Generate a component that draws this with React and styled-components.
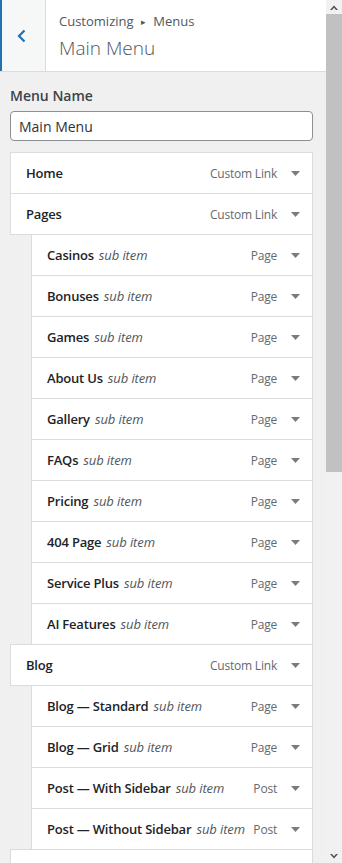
import React from 'react';
import styled, { createGlobalStyle } from 'styled-components';

const GlobalStyle = createGlobalStyle`
    html, body {
        margin: 0;
        padding: 0;
        background: #f0f0f1;
    }
    body {
        font-family: "Open Sans", "Noto Sans", sans-serif;
        color: #1d2327;
    }
`;

const items = [
    { title: 'Home', type: 'Custom Link' },
    { title: 'Pages', type: 'Custom Link' },
    { title: 'Casinos', type: 'Page', sub: true },
    { title: 'Bonuses', type: 'Page', sub: true },
    { title: 'Games', type: 'Page', sub: true },
    { title: 'About Us', type: 'Page', sub: true },
    { title: 'Gallery', type: 'Page', sub: true },
    { title: 'FAQs', type: 'Page', sub: true },
    { title: 'Pricing', type: 'Page', sub: true },
    { title: '404 Page', type: 'Page', sub: true },
    { title: 'Service Plus', type: 'Page', sub: true },
    { title: 'AI Features', type: 'Page', sub: true },
    { title: 'Blog', type: 'Custom Link' },
    { title: 'Blog — Standard', type: 'Page', sub: true },
    { title: 'Blog — Grid', type: 'Page', sub: true },
    { title: 'Post — With Sidebar', type: 'Post', sub: true },
    { title: 'Post — Without Sidebar', type: 'Post', sub: true },
];

export default function App() {
    return (
        <>
            <GlobalStyle />
            <Frame>
                <Panel>
                    <Header>
                        <BackButton aria-label="Back">
                            <svg width="9" height="14" viewBox="0 0 9 14">
                                <path d="M7.5 1.5 L2 7 L7.5 12.5" fill="none" stroke="#2271b1" strokeWidth="2.2" />
                            </svg>
                        </BackButton>
                        <HeaderText>
                            <Breadcrumb>
                                Customizing <Sep>▸</Sep> Menus
                            </Breadcrumb>
                            <Title>Main Menu</Title>
                        </HeaderText>
                    </Header>

                    <Body>
                        <Label>Menu Name</Label>
                        <NameInput defaultValue="Main Menu" />

                        <MenuList>
                            {items.map((item) => (
                                <MenuItem key={item.title} $sub={item.sub}>
                                    <ItemTitle>
                                        {item.title}
                                        {item.sub && <SubLabel>sub item</SubLabel>}
                                    </ItemTitle>
                                    <ItemType>{item.type}</ItemType>
                                    <Toggle>
                                        <svg width="9" height="5" viewBox="0 0 9 5">
                                            <path d="M0 0 H9 L4.5 5 Z" fill="#787c82" />
                                        </svg>
                                    </Toggle>
                                </MenuItem>
                            ))}
                            <MenuItem />
                        </MenuList>
                    </Body>
                </Panel>

                <Scrollbar>
                    <ScrollArrow>
                        <svg width="8" height="5" viewBox="0 0 8 5">
                            <path d="M0 5 L4 0.5 L8 5 H6 L4 2.7 L2 5 Z" fill="#505050" />
                        </svg>
                    </ScrollArrow>
                    <Thumb />
                    <Track />
                    <ScrollArrow>
                        <svg width="8" height="5" viewBox="0 0 8 5">
                            <path d="M0 0 L4 4.5 L8 0 H6 L4 2.3 L2 0 Z" fill="#505050" />
                        </svg>
                    </ScrollArrow>
                </Scrollbar>
            </Frame>
        </>
    );
}

const Frame = styled.div`
    display: flex;
    height: 100vh;
    overflow: hidden;
`;

const Panel = styled.div`
    flex: 1;
    min-width: 0;
    overflow: hidden;
    background: #f0f0f1;
`;

const Header = styled.div`
    display: flex;
    height: 71px;
    background: #fff;
    border-bottom: 1px solid #dcdcde;
`;

const BackButton = styled.button`
    width: 46px;
    height: 71px;
    flex-shrink: 0;
    display: flex;
    align-items: center;
    justify-content: center;
    padding: 0 5px 0 0;
    background: #f6f7f7;
    border: none;
    border-left: 2px solid #2271b1;
    border-right: 1px solid #dcdcde;
    cursor: pointer;
`;

const HeaderText = styled.div`
    display: flex;
    flex-direction: column;
    padding: 11px 0 0 13px;
`;

const Breadcrumb = styled.span`
    font-size: 13px;
    line-height: 20px;
    color: #50575e;
`;

const Sep = styled.span`
    font-size: 9px;
    margin: 0 4px;
    position: relative;
    top: -1px;
`;

const Title = styled.h2`
    margin: 2px 0 0;
    font-size: 19px;
    line-height: 26px;
    font-weight: 300;
    color: #50575e;
`;

const Body = styled.div`
    padding: 14px 13px 0 10px;
`;

const Label = styled.div`
    font-size: 14px;
    font-weight: 600;
    line-height: 20px;
    color: #3c434a;
    margin-bottom: 5px;
`;

const NameInput = styled.input`
    box-sizing: border-box;
    display: block;
    width: 100%;
    height: 30px;
    padding: 0 8px;
    border: 1px solid #8c8f94;
    border-radius: 4px;
    font-family: "Open Sans", "Noto Sans", sans-serif;
    font-size: 14px;
    color: #2c3338;
    background: #fff;
    outline: none;
`;

const MenuList = styled.div`
    margin-top: 11px;
`;

const MenuItem = styled.div`
    box-sizing: border-box;
    display: flex;
    align-items: center;
    height: 42px;
    margin-top: -1px;
    margin-left: ${({ $sub }) => ($sub ? '21px' : '0')};
    padding: 0 12px 0 15px;
    background: #fff;
    border: 1px solid #dcdcde;

    &:first-child {
        margin-top: 0;
    }
`;

const ItemTitle = styled.span`
    flex: 1;
    min-width: 0;
    white-space: nowrap;
    font-size: 13px;
    font-weight: 600;
    color: #1d2327;
    letter-spacing: -0.2px;
`;

const SubLabel = styled.em`
    font-weight: 400;
    color: #50575e;
    margin-left: 5px;
    letter-spacing: -0.1px;
`;

const ItemType = styled.span`
    font-size: 12px;
    color: #646970;
    white-space: nowrap;
    letter-spacing: -0.2px;
`;

const Toggle = styled.span`
    display: flex;
    align-items: center;
    margin-left: 14px;
    width: 9px;
`;

const Scrollbar = styled.div`
    width: 16px;
    flex-shrink: 0;
    display: flex;
    flex-direction: column;
    background: #f1f1f1;
`;

const ScrollArrow = styled.div`
    height: 14px;
    flex-shrink: 0;
    display: flex;
    align-items: center;
    justify-content: center;
`;

const Thumb = styled.div`
    height: 458px;
    flex-shrink: 0;
    background: #c1c1c1;
`;

const Track = styled.div`
    flex: 1;
`;
